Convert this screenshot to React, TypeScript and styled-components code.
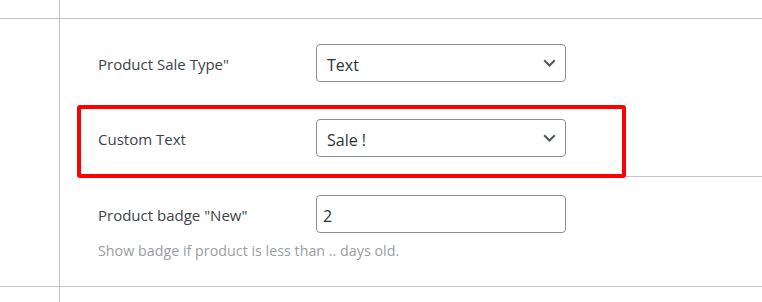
import styled, { createGlobalStyle } from "styled-components";

const GlobalStyle = createGlobalStyle`
  body {
    margin: 0;
    background: #fff;
    font-family: "Open Sans", "Noto Sans", Arial, sans-serif;
  }
`;

const Page = styled.div`
  min-height: 302px;
  display: flex;
  flex-direction: column;
`;

const Band = styled.div<{ $grow?: boolean; $height?: number }>`
  display: grid;
  grid-template-columns: 60px 1fr;
  border-bottom: ${(props) => (props.$grow ? "none" : "1px solid #c3c4c7")};
  flex: ${(props) => (props.$grow ? 1 : "none")};
  height: ${(props) => (props.$height ? `${props.$height}px` : "auto")};
`;

const Gutter = styled.div`
  box-sizing: border-box;
  border-right: 1px solid #c3c4c7;
`;

const Main = styled.div`
  padding: 7px 0 0 18px;
`;

const Row = styled.div<{ $divider?: boolean; $bottom?: number }>`
  position: relative;
  display: grid;
  grid-template-columns: 218px 250px;
  align-items: center;
  padding: 18px 0 ${(props) => props.$bottom ?? 19}px 20px;
  border-bottom: ${(props) => (props.$divider ? "1px solid #c3c4c7" : "none")};
`;

const Label = styled.label`
  padding-top: 1px;
  font-size: 15px;
  color: #3c434a;
  line-height: 20px;
`;

const SelectWrap = styled.div`
  position: relative;
  display: flex;
`;

const Select = styled.select`
  appearance: none;
  box-sizing: border-box;
  width: 250px;
  height: 38px;
  padding: 3px 30px 0 10px;
  border: 1px solid #8c8f94;
  border-radius: 4px;
  background: #fff;
  font-family: inherit;
  font-size: 16px;
  color: #2c3338;
  outline: none;
`;

const Chevron = styled.svg`
  position: absolute;
  right: 10px;
  top: 15px;
  pointer-events: none;
`;

const TextInput = styled.input`
  box-sizing: border-box;
  width: 250px;
  height: 38px;
  padding: 4px 6px 0;
  border: 1px solid #8c8f94;
  border-radius: 4px;
  font-family: inherit;
  font-size: 16px;
  color: #2c3338;
  outline: none;
`;

const Hint = styled.p`
  grid-column: 1 / -1;
  margin: 9px 0 0;
  font-size: 14.3px;
  line-height: 18px;
  color: #9a9da1;
`;

const Highlight = styled.div`
  position: absolute;
  left: -1px;
  top: 4px;
  width: 549px;
  height: 73px;
  box-sizing: border-box;
  border: 4px solid #ff0000;
  border-radius: 3px;
  pointer-events: none;
`;

function Dropdown({ value, options }: { value: string; options: string[] }) {
  return (
    <SelectWrap>
      <Select defaultValue={value}>
        {options.map((o) => (
          <option key={o}>{o}</option>
        ))}
      </Select>
      <Chevron width="13" height="8" viewBox="0 0 13 8">
        <path d="M1.2 1.2 L6.5 6.5 L11.8 1.2" fill="none" stroke="#50575e" strokeWidth="2" />
      </Chevron>
    </SelectWrap>
  );
}

export default function App() {
  return (
    <Page>
      <GlobalStyle />
      <Band $height={18}>
        <Gutter />
        <div />
      </Band>
      <Band>
        <Gutter />
        <Main>
          <Row $bottom={19}>
            <Label>Product Sale Type"</Label>
            <Dropdown value="Text" options={["Text", "Percent"]} />
          </Row>
          <Row $divider>
            <Label>Custom Text</Label>
            <Dropdown value="Sale !" options={["Sale !", "Hot"]} />
            <Highlight />
          </Row>
          <Row $bottom={26}>
            <Label>Product badge "New"</Label>
            <TextInput defaultValue="2" />
            <Hint>Show badge if product is less than .. days old.</Hint>
          </Row>
        </Main>
      </Band>
      <Band $grow>
        <Gutter />
        <div />
      </Band>
    </Page>
  );
}
